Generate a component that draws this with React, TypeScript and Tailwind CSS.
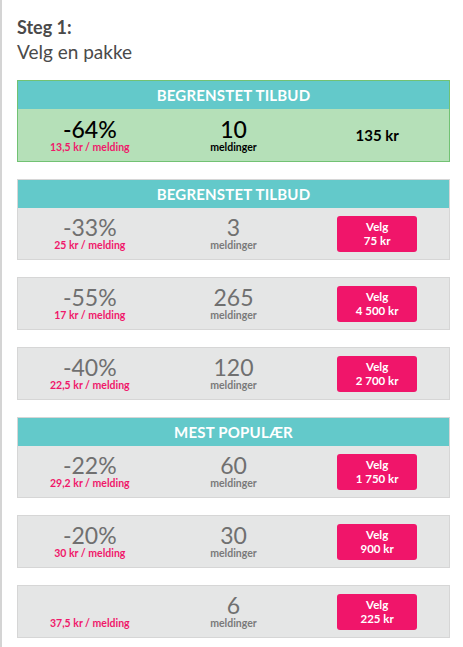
import React from "react";

type Pkg = { pct: string; per: string; count: string; price: string; header?: string };

const pkgs: Pkg[] = [
  { header: "BEGRENSTET TILBUD", pct: "-33%", per: "25 kr / melding", count: "3", price: "75 kr" },
  { pct: "-55%", per: "17 kr / melding", count: "265", price: "4 500 kr" },
  { pct: "-40%", per: "22,5 kr / melding", count: "120", price: "2 700 kr" },
  { header: "MEST POPULÆR", pct: "-22%", per: "29,2 kr / melding", count: "60", price: "1 750 kr" },
  { pct: "-20%", per: "30 kr / melding", count: "30", price: "900 kr" },
  { pct: "", per: "37,5 kr / melding", count: "6", price: "225 kr" },
];

function Header({ text }: { text: string }) {
  return (
    <div className="h-[28px] bg-[#63c9ca] flex items-center justify-center text-white font-bold text-[15px] tracking-[0.2px]">
      {text}
    </div>
  );
}

export default function App() {
  return (
    <div
      className="min-h-[647px] w-[463px] bg-white border-l-2 border-[#d4d4d4] pl-[15px] pr-[13px] pt-[16px]"
      style={{ fontFamily: "Lato, 'Open Sans', sans-serif" }}
    >
      <div className="text-[#4a4a4a] font-bold text-[18px] leading-[23px]">Steg 1:</div>
      <div className="text-[#4a4a4a] text-[19px] leading-[26px]">Velg en pakke</div>

      <div className="mt-[15px] border border-[#72c273]">
        <Header text="BEGRENSTET TILBUD" />
        <div className="h-[52px] bg-[#b5e0b8] grid grid-cols-3 items-center">
          <div className="flex flex-col items-center pt-[1px]">
            <div className="text-[23px] leading-[23px] text-black font-medium">-64%</div>
            <div className="text-[10.5px] leading-[13px] font-bold text-[#f0186a]">13,5 kr / melding</div>
          </div>
          <div className="flex flex-col items-center pt-[1px]">
            <div className="text-[23px] leading-[23px] text-black font-medium">10</div>
            <div className="text-[10.5px] leading-[13px] font-bold text-black">meldinger</div>
          </div>
          <div className="flex justify-center text-[15px] font-bold text-black">135 kr</div>
        </div>
      </div>

      <div className="mt-[17px] flex flex-col gap-[17px]">
        {pkgs.map((p, i) => (
          <div key={i} className="border border-[#d6d6d6]">
            {p.header && <Header text={p.header} />}
            <div className="h-[51px] bg-[#e5e6e6] grid grid-cols-3 items-center">
              <div className="flex flex-col items-center pt-[1px]">
                <div className="text-[23px] leading-[23px] h-[23px] text-[#707070] font-normal">{p.pct}</div>
                <div className="text-[10.5px] leading-[13px] font-bold text-[#f0186a]">{p.per}</div>
              </div>
              <div className="flex flex-col items-center pt-[1px]">
                <div className="text-[23px] leading-[23px] text-[#707070] font-normal">{p.count}</div>
                <div className="text-[10.5px] leading-[13px] font-bold text-[#7a7a7a]">meldinger</div>
              </div>
              <div className="flex justify-center">
                <button className="w-[80px] h-[36px] rounded-[3px] bg-[#f0156a] text-white text-[11.5px] font-bold leading-[14px] flex flex-col items-center justify-center">
                  <span>Velg</span>
                  <span>{p.price}</span>
                </button>
              </div>
            </div>
          </div>
        ))}
      </div>
    </div>
  );
}
